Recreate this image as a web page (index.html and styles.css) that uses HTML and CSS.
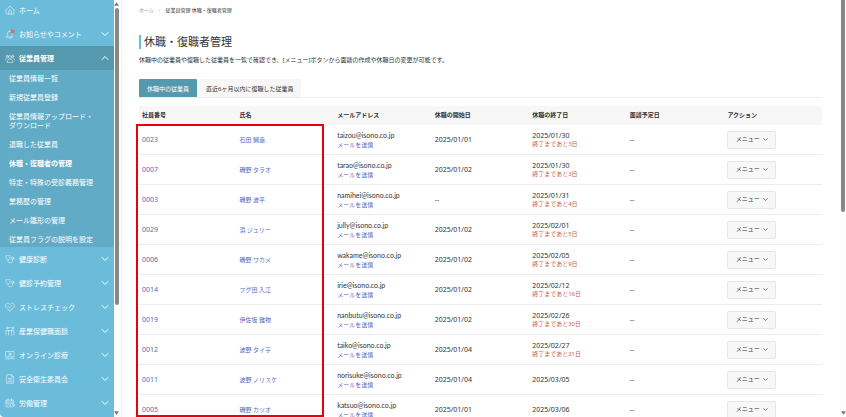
FILE: index.html
```
<!DOCTYPE html>
<html lang="ja">
<head>
    <meta charset="UTF-8">
    <meta name="viewport" content="width=device-width, initial-scale=1.0">
    <title>休職・復職者管理</title>
    <link rel="stylesheet" href="styles.css">
</head>
<body>
    <svg class="defs" aria-hidden="true">
        <symbol id="down" viewBox="0 0 8 8"><path d="M1 2.500 4 5.500 7 2.500"/></symbol>
        <symbol id="up" viewBox="0 0 8 8"><path d="M1 5.500 4 2.500 7 5.500"/></symbol>
        <symbol id="home" viewBox="0 0 20 20"><path d="M2 9.500 10 2l8 7.500V16a2 2 0 0 1-2 2H4a2 2 0 0 1-2-2zM7.500 18v-6a2.500 2.500 0 0 1 5 0v6"/></symbol>
        <symbol id="bell" viewBox="0 0 20 20"><path d="M3 16h13c-2-2-2-4-2-7a4.500 4.500 0 0 0-9 0c0 3 0 5-2 7zM8 16c0 4 4 4 4 0M9.500 4.500V3"/><circle class="dot" cx="15" cy="5" r="4"/></symbol>
        <symbol id="people" viewBox="0 0 20 20"><circle cx="10" cy="8" r="3"/><circle cx="4.500" cy="6.500" r="2"/><circle cx="15.500" cy="6.500" r="2"/><path d="M4 18c0-8 12-8 12 0zM1 14c0-3 1-4 3.500-4M19 14c0-3-1-4-3.500-4"/></symbol>
        <symbol id="steth" viewBox="0 0 20 20"><path d="M4 3H2v4c0 6 8 6 8 0V3H8M6 12v2c0 5 9 5 9 0v-3"/><circle cx="15.500" cy="8.500" r="2.500"/></symbol>
        <symbol id="heart" viewBox="0 0 20 20"><path d="M10 17.500C5 14 1 11 1 7c0-5 7-6 9-2 2-4 9-3 9 2 0 4-4 7-9 10.500zM6 9l3 3 5-5"/></symbol>
        <symbol id="meeting" viewBox="0 0 20 20"><circle cx="4.500" cy="4" r="2"/><circle cx="15.500" cy="4" r="2"/><path d="M2 18V9h16v9M7 9v9M13 9v9M9 3h2"/></symbol>
        <symbol id="screen" viewBox="0 0 20 20"><path d="M2 3h16v11H2zM1 17.500h18M6 14c0-5 8-5 8 0"/><circle cx="10" cy="7.500" r="2"/></symbol>
        <symbol id="doc" viewBox="0 0 20 20"><path d="M4 1.500h9l4 4v13H4zM13 1.500v4h4M7 9h7M7 12h7M7 15h7"/></symbol>
        <symbol id="labor" viewBox="0 0 20 20"><path d="M10 18H2V4h15v4M2 8h15M6 1.500v4M13 1.500v4M5 11h3M5 14h3"/><circle cx="14.500" cy="14" r="4"/><path d="M14.500 12v2h2"/></symbol>
    </svg>

    <div class="app">
        <nav class="sidebar">
            <a class="item home" href="#"><svg class="icon"><use href="#home"/></svg><span>ホーム</span></a>
            <button class="item"><svg class="icon"><use href="#bell"/></svg><span>お知らせやコメント</span><svg class="chev"><use href="#down"/></svg></button>
            <button class="item active"><svg class="icon"><use href="#people"/></svg><span>従業員管理</span><svg class="chev"><use href="#up"/></svg></button>
            <div class="submenu">
                <a href="#">従業員情報一覧</a>
                <a href="#">新規従業員登録</a>
                <a href="#">従業員情報アップロード・<br>ダウンロード</a>
                <a href="#">退職した従業員</a>
                <a href="#" class="current">休職・復職者の管理</a>
                <a href="#">特定・特殊の受診義務管理</a>
                <a href="#">業務歴の管理</a>
                <a href="#">メール雛形の管理</a>
                <a href="#">従業員フラグの説明を設定</a>
            </div>
            <button class="item"><svg class="icon"><use href="#steth"/></svg><span>健康診断</span><svg class="chev"><use href="#down"/></svg></button>
            <button class="item"><svg class="icon"><use href="#steth"/></svg><span>健診予約管理</span><svg class="chev"><use href="#down"/></svg></button>
            <button class="item"><svg class="icon"><use href="#heart"/></svg><span>ストレスチェック</span><svg class="chev"><use href="#down"/></svg></button>
            <button class="item"><svg class="icon"><use href="#meeting"/></svg><span>産業保健職面談</span><svg class="chev"><use href="#down"/></svg></button>
            <button class="item"><svg class="icon"><use href="#screen"/></svg><span>オンライン診療</span><svg class="chev"><use href="#down"/></svg></button>
            <button class="item"><svg class="icon"><use href="#doc"/></svg><span>安全衛生委員会</span><svg class="chev"><use href="#down"/></svg></button>
            <button class="item"><svg class="icon"><use href="#labor"/></svg><span>労働管理</span><svg class="chev"><use href="#down"/></svg></button>
        </nav>
        <div class="scrollbar side-scroll">
            <svg class="arrow" viewBox="0 0 6 4"><path d="M3 0 6 4H0z"/></svg>
            <div class="thumb"></div>
            <svg class="arrow" viewBox="0 0 6 4"><path d="M0 0h6L3 4z"/></svg>
        </div>

        <main>
            <div class="breadcrumb"><a href="#">ホーム</a><span class="sep">›</span><span>従業員管理 休職・復職者管理</span></div>
            <h1>休職・復職者管理</h1>
            <p class="lead">休職中の従業員や復職した従業員を一覧で確認でき、[メニュー]ボタンから面談の作成や休職日の変更が可能です。</p>
            <div class="tabs">
                <button class="tab selected">休職中の従業員</button>
                <button class="tab">直近6ヶ月以内に復職した従業員</button>
            </div>
            <div class="table-wrap">
                <table>
                    <thead>
                        <tr><th>社員番号</th><th>氏名</th><th>メールアドレス</th><th>休職の開始日</th><th>休職の終了日</th><th>面談予定日</th><th>アクション</th></tr>
                    </thead>
                    <tbody>
                        <tr><td><a href="#">0023</a></td><td><a class="ja" href="#">石田 鯛造</a></td><td class="mail">taizou@isono.co.jp<a class="ja line" href="#">メールを送信</a></td><td>2025/01/01</td><td>2025/01/30<span class="ja line warn">終了まであと3日</span></td><td>--</td><td><button class="menu">メニュー<svg><use href="#down"/></svg></button></td></tr>
                        <tr><td><a href="#">0007</a></td><td><a class="ja" href="#">磯野 タラオ</a></td><td class="mail">tarao@isono.co.jp<a class="ja line" href="#">メールを送信</a></td><td>2025/01/02</td><td>2025/01/30<span class="ja line warn">終了まであと3日</span></td><td>--</td><td><button class="menu">メニュー<svg><use href="#down"/></svg></button></td></tr>
                        <tr><td><a href="#">0003</a></td><td><a class="ja" href="#">磯野 波平</a></td><td class="mail">namihei@isono.co.jp<a class="ja line" href="#">メールを送信</a></td><td>--</td><td>2025/01/31<span class="ja line warn">終了まであと4日</span></td><td>--</td><td><button class="menu">メニュー<svg><use href="#down"/></svg></button></td></tr>
                        <tr><td><a href="#">0029</a></td><td><a class="ja" href="#">浜 ジュリー</a></td><td class="mail">jully@isono.co.jp<a class="ja line" href="#">メールを送信</a></td><td>2025/01/02</td><td>2025/02/01<span class="ja line warn">終了まであと5日</span></td><td>--</td><td><button class="menu">メニュー<svg><use href="#down"/></svg></button></td></tr>
                        <tr><td><a href="#">0006</a></td><td><a class="ja" href="#">磯野 ワカメ</a></td><td class="mail">wakame@isono.co.jp<a class="ja line" href="#">メールを送信</a></td><td>2025/01/02</td><td>2025/02/05<span class="ja line warn">終了まであと9日</span></td><td>--</td><td><button class="menu">メニュー<svg><use href="#down"/></svg></button></td></tr>
                        <tr><td><a href="#">0014</a></td><td><a class="ja" href="#">フグ田 入江</a></td><td class="mail">irie@isono.co.jp<a class="ja line" href="#">メールを送信</a></td><td>2025/01/02</td><td>2025/02/12<span class="ja line warn">終了まであと16日</span></td><td>--</td><td><button class="menu">メニュー<svg><use href="#down"/></svg></button></td></tr>
                        <tr><td><a href="#">0019</a></td><td><a class="ja" href="#">伊佐坂 難物</a></td><td class="mail">nanbutu@isono.co.jp<a class="ja line" href="#">メールを送信</a></td><td>2025/01/02</td><td>2025/02/26<span class="ja line warn">終了まであと30日</span></td><td>--</td><td><button class="menu">メニュー<svg><use href="#down"/></svg></button></td></tr>
                        <tr><td><a href="#">0012</a></td><td><a class="ja" href="#">波野 タイ子</a></td><td class="mail">taiko@isono.co.jp<a class="ja line" href="#">メールを送信</a></td><td>2025/01/04</td><td>2025/02/27<span class="ja line warn">終了まであと31日</span></td><td>--</td><td><button class="menu">メニュー<svg><use href="#down"/></svg></button></td></tr>
                        <tr><td><a href="#">0011</a></td><td><a class="ja" href="#">波野 ノリスケ</a></td><td class="mail">norisuke@isono.co.jp<a class="ja line" href="#">メールを送信</a></td><td>2025/01/04</td><td>2025/03/05</td><td>--</td><td><button class="menu">メニュー<svg><use href="#down"/></svg></button></td></tr>
                        <tr><td><a href="#">0005</a></td><td><a class="ja" href="#">磯野 カツオ</a></td><td class="mail">katsuo@isono.co.jp<a class="ja line" href="#">メールを送信</a></td><td>2025/01/01</td><td>2025/03/06</td><td>--</td><td><button class="menu">メニュー<svg><use href="#down"/></svg></button></td></tr>
                    </tbody>
                </table>
                <div class="highlight"></div>
            </div>
        </main>
        <div class="scrollbar page-scroll">
            <div class="thumb"></div>
            <svg class="arrow" viewBox="0 0 6 4"><path d="M0 0h6L3 4z"/></svg>
        </div>
    </div>
</body>
</html>
```
FILE: styles.css
```
* { box-sizing: border-box; }
body { margin: 0; font-family: "Noto Sans", "Noto Sans CJK JP", sans-serif; font-size: 7px; color: #333; background: #fff; }
a { color: #5468bd; text-decoration: none; }
button { font: inherit; color: inherit; border: none; background: none; padding: 0; cursor: pointer; }
svg { fill: none; stroke: currentColor; stroke-linecap: round; stroke-linejoin: round; flex: none; }
.defs { display: none; }
.app { display: flex; height: 100vh; overflow: hidden; }

/* sidebar */
.sidebar { width: 114px; flex: none; background: #6bbcda; color: #fff; overflow: hidden; border-bottom-left-radius: 4px; font-family: "Noto Sans CJK JP", sans-serif; }
.item { display: flex; align-items: center; gap: 4px; width: 100%; height: 24px; padding: 0 5px; color: #fff; text-align: left; }
.item span { flex: 1; white-space: nowrap; }
.item.home { height: 22px; padding-bottom: 2px; }
.item.active { background: #5599ae; font-weight: bold; }
.icon { width: 10px; height: 10px; stroke-width: 1px; }
.dot { fill: #f0625a; stroke: none; }
.chev { width: 8px; height: 8px; stroke-width: 1px; }
.submenu { display: flex; flex-direction: column; gap: 10px; padding: 4px 9px 3px; background: #62abc6; line-height: 9px; }
.submenu a { color: #fff; white-space: nowrap; }
.submenu .current { font-weight: bold; }

/* scrollbars */
.scrollbar { display: flex; flex-direction: column; align-items: center; width: 6px; flex: none; background: #fcfcfc; padding: 2px 0; }
.thumb { width: 4px; border-radius: 2px; background: #888; }
.arrow { width: 5px; height: 4px; fill: #777; stroke: none; }
.side-scroll { width: 8px; padding-right: 2px; border-right: 1px solid #f5f5f5; }
.side-scroll .thumb { height: 72%; margin: 2px 0 auto; }
.page-scroll { padding-top: 0; }
.page-scroll .thumb { height: 51%; margin-bottom: auto; border-radius: 0 0 2px 2px; }

/* content */
main { flex: 1; min-width: 0; display: flex; flex-direction: column; padding: 5px 18px 0 17px; overflow: hidden; }
.breadcrumb { display: flex; gap: 5px; font-size: 5px; line-height: 10px; }
.breadcrumb a, .sep { color: #999; }
h1 { margin: 20px 0 0; padding-left: 3px; border-left: 2px solid #6bbcda; font-size: 11px; line-height: 14px; font-weight: normal; }
.lead { margin: 6px 0 14px; font-size: 6px; line-height: 10px; }
.tabs { display: flex; gap: 1px; border-bottom: 1px solid #eee; font-size: 6px; }
.tab { height: 18px; padding: 0 8px; background: #f7f7f7; border-radius: 1px 1px 0 0; }
.tab.selected { background: #5599ae; color: #fff; }
.table-wrap { position: relative; flex: 1; min-height: 0; margin-top: 8px; }
table { width: 100%; table-layout: fixed; border-collapse: separate; border-spacing: 0; line-height: 9px; }
th { height: 19px; padding: 0 3px; background: #f7f7f7; font-size: 6px; text-align: left; }
td { height: 30px; padding: 0 3px; border-bottom: 1px solid #ececec; white-space: nowrap; }
.mail { font-family: Lato, "Noto Sans CJK JP", sans-serif; }
.ja { font-size: 6px; }
.line { display: block; }
.warn { color: #c9604a; }
.menu { display: flex; align-items: center; justify-content: center; gap: 3px; width: 49px; height: 18px; border: 1px solid #e6e6e6; border-radius: 2px; background: #f7f7f7; font-size: 6px; }
.menu svg { width: 5px; height: 5px; stroke-width: 1px; }

.highlight { position: absolute; top: 18px; bottom: 0; left: -3px; width: calc(100% * 2 / 7 - 7px); border: 2px solid #e8000b; pointer-events: none; }
```
